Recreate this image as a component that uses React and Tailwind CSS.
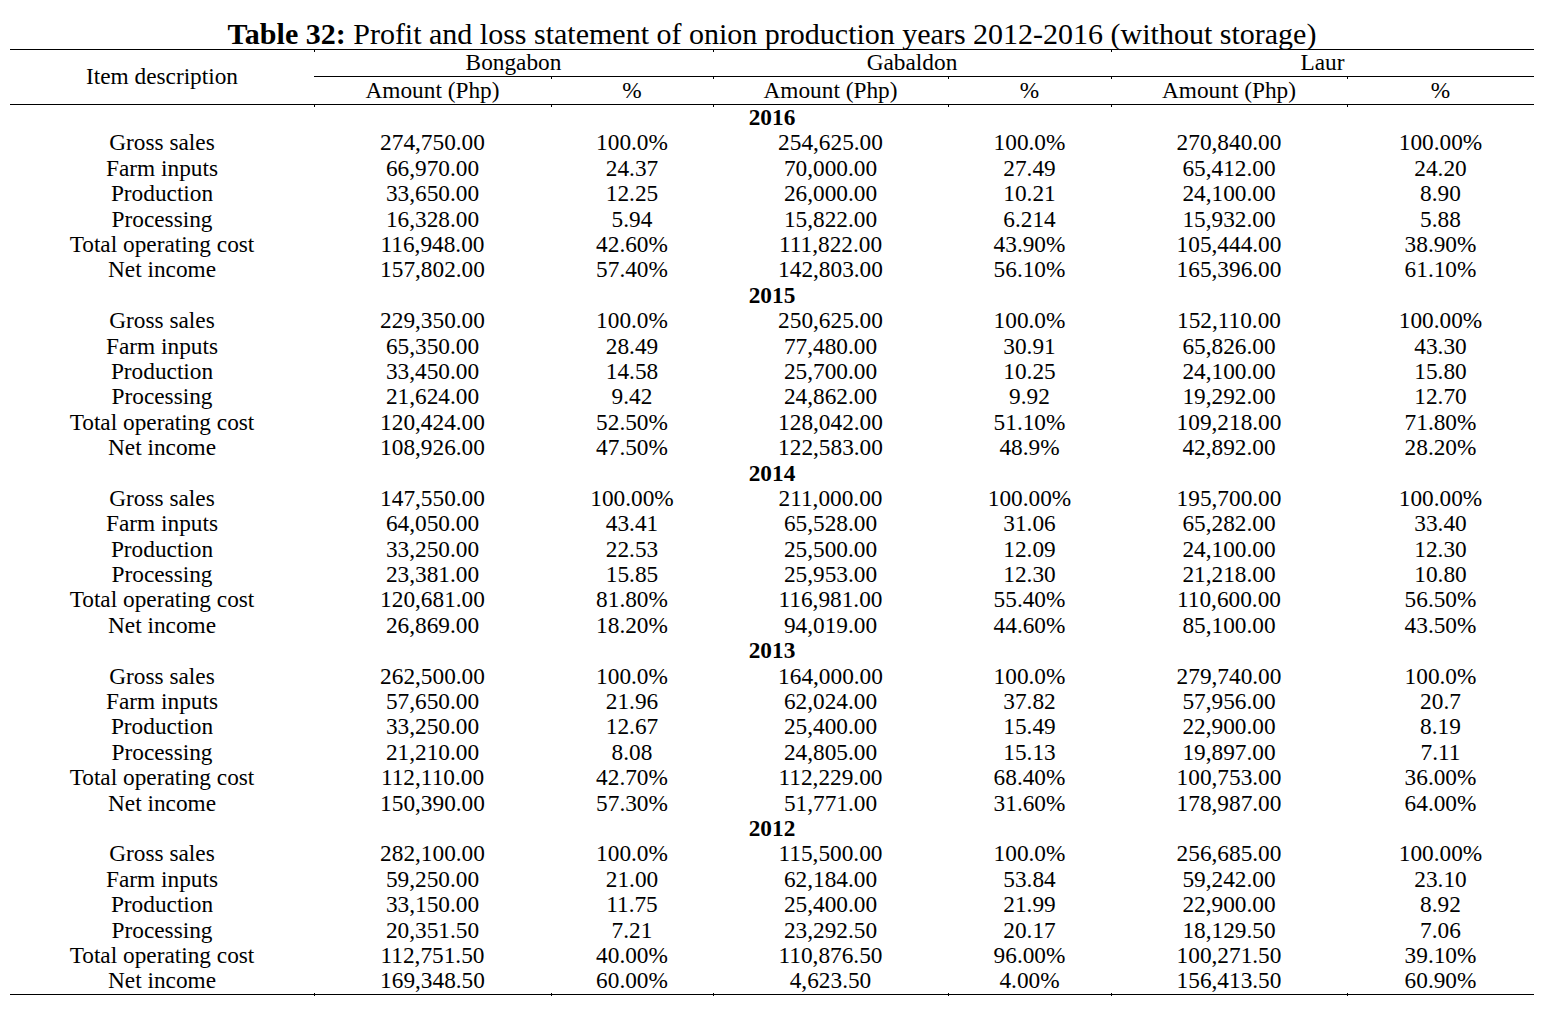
import React from "react";

const data = [
  ["2016", [
    ["Gross sales", "274,750.00", "100.0%", "254,625.00", "100.0%", "270,840.00", "100.00%"],
    ["Farm inputs", "66,970.00", "24.37", "70,000.00", "27.49", "65,412.00", "24.20"],
    ["Production", "33,650.00", "12.25", "26,000.00", "10.21", "24,100.00", "8.90"],
    ["Processing", "16,328.00", "5.94", "15,822.00", "6.214", "15,932.00", "5.88"],
    ["Total operating cost", "116,948.00", "42.60%", "111,822.00", "43.90%", "105,444.00", "38.90%"],
    ["Net income", "157,802.00", "57.40%", "142,803.00", "56.10%", "165,396.00", "61.10%"],
  ]],
  ["2015", [
    ["Gross sales", "229,350.00", "100.0%", "250,625.00", "100.0%", "152,110.00", "100.00%"],
    ["Farm inputs", "65,350.00", "28.49", "77,480.00", "30.91", "65,826.00", "43.30"],
    ["Production", "33,450.00", "14.58", "25,700.00", "10.25", "24,100.00", "15.80"],
    ["Processing", "21,624.00", "9.42", "24,862.00", "9.92", "19,292.00", "12.70"],
    ["Total operating cost", "120,424.00", "52.50%", "128,042.00", "51.10%", "109,218.00", "71.80%"],
    ["Net income", "108,926.00", "47.50%", "122,583.00", "48.9%", "42,892.00", "28.20%"],
  ]],
  ["2014", [
    ["Gross sales", "147,550.00", "100.00%", "211,000.00", "100.00%", "195,700.00", "100.00%"],
    ["Farm inputs", "64,050.00", "43.41", "65,528.00", "31.06", "65,282.00", "33.40"],
    ["Production", "33,250.00", "22.53", "25,500.00", "12.09", "24,100.00", "12.30"],
    ["Processing", "23,381.00", "15.85", "25,953.00", "12.30", "21,218.00", "10.80"],
    ["Total operating cost", "120,681.00", "81.80%", "116,981.00", "55.40%", "110,600.00", "56.50%"],
    ["Net income", "26,869.00", "18.20%", "94,019.00", "44.60%", "85,100.00", "43.50%"],
  ]],
  ["2013", [
    ["Gross sales", "262,500.00", "100.0%", "164,000.00", "100.0%", "279,740.00", "100.0%"],
    ["Farm inputs", "57,650.00", "21.96", "62,024.00", "37.82", "57,956.00", "20.7"],
    ["Production", "33,250.00", "12.67", "25,400.00", "15.49", "22,900.00", "8.19"],
    ["Processing", "21,210.00", "8.08", "24,805.00", "15.13", "19,897.00", "7.11"],
    ["Total operating cost", "112,110.00", "42.70%", "112,229.00", "68.40%", "100,753.00", "36.00%"],
    ["Net income", "150,390.00", "57.30%", "51,771.00", "31.60%", "178,987.00", "64.00%"],
  ]],
  ["2012", [
    ["Gross sales", "282,100.00", "100.0%", "115,500.00", "100.0%", "256,685.00", "100.00%"],
    ["Farm inputs", "59,250.00", "21.00", "62,184.00", "53.84", "59,242.00", "23.10"],
    ["Production", "33,150.00", "11.75", "25,400.00", "21.99", "22,900.00", "8.92"],
    ["Processing", "20,351.50", "7.21", "23,292.50", "20.17", "18,129.50", "7.06"],
    ["Total operating cost", "112,751.50", "40.00%", "110,876.50", "96.00%", "100,271.50", "39.10%"],
    ["Net income", "169,348.50", "60.00%", "4,623.50", "4.00%", "156,413.50", "60.90%"],
  ]],
];

const cols = "grid grid-cols-[304px_237px_162px_235px_163px_236px_187px]";

const allX = [304, 541, 703, 938, 1101, 1337];
const ticks = [
  ...[304, 703, 1101].map((x) => ({ x, top: -1 })),
  ...[541, 703, 938, 1101, 1337].map((x) => ({ x, top: 26 })),
  ...allX.map((x) => ({ x, top: 54 })),
];

export default function App() {
  return (
    <div className="bg-white min-h-[1010px] w-[1546px] pl-[10px] text-black font-['Liberation_Serif',serif]">
      <div className="w-[1524px] h-[49px] flex items-end justify-center pb-[1px]">
        <div className="text-[30px] leading-[28px]">
          <span className="font-bold">Table 32:</span> Profit and loss statement of onion production years 2012-2016 (without storage)
        </div>
      </div>
      <div className="relative w-[1524px] border-t border-b border-black text-[23.3px]">
        <div className={`${cols} border-b border-black`}>
          <div className="row-span-2 flex items-center justify-center h-[54px] leading-none">Item description</div>
          <div className="col-span-2 h-[27px] flex items-center justify-center border-b border-black leading-none">Bongabon</div>
          <div className="col-span-2 h-[27px] flex items-center justify-center border-b border-black leading-none">Gabaldon</div>
          <div className="col-span-2 h-[27px] flex items-center justify-center border-b border-black leading-none">Laur</div>
          <div className="h-[27px] flex items-center justify-center leading-none">Amount (Php)</div>
          <div className="h-[27px] flex items-center justify-center leading-none">%</div>
          <div className="h-[27px] flex items-center justify-center leading-none">Amount (Php)</div>
          <div className="h-[27px] flex items-center justify-center leading-none">%</div>
          <div className="h-[27px] flex items-center justify-center leading-none">Amount (Php)</div>
          <div className="h-[27px] flex items-center justify-center leading-none">%</div>
        </div>
        {data.map(([year, rows]) => (
          <div key={year}>
            <div className="h-[25.4px] flex items-center justify-center font-bold leading-none">{year}</div>
            {rows.map((r, i) => (
              <div key={i} className={cols}>
                {r.map((c, j) => (
                  <div key={j} className="h-[25.4px] flex items-center justify-center leading-none whitespace-nowrap">{c}</div>
                ))}
              </div>
            ))}
          </div>
        ))}
        {ticks.map((t, i) => (
          <div key={i} className="absolute w-px h-[3px] bg-black" style={{ left: t.x, top: t.top }} />
        ))}
        {allX.map((x) => (
          <div key={"b" + x} className="absolute w-px h-[3px] bg-black bottom-[-2px]" style={{ left: x }} />
        ))}
      </div>
    </div>
  );
}
